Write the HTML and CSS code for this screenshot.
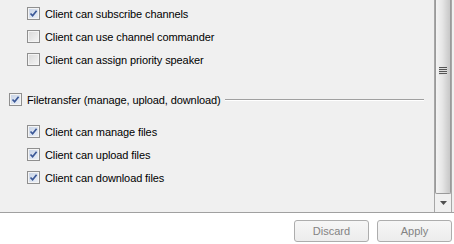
FILE: index.html
```html
<!DOCTYPE html>
<html lang="en">
<head>
    <meta charset="UTF-8">
    <title>Permissions</title>
    <link rel="stylesheet" href="styles.css">
</head>
<body>
    <div class="panel">
        <div class="content">
            <div class="row">
                <span class="box checked"><svg viewBox="0 0 9 9"><path d="M1.5 4.5 L3.6 6.8 L7.6 1.8"/></svg></span>
                Client can subscribe channels
            </div>
            <div class="row">
                <span class="box"></span>
                Client can use channel commander
            </div>
            <div class="row">
                <span class="box"></span>
                Client can assign priority speaker
            </div>

            <div class="group">
                <span class="box checked"><svg viewBox="0 0 9 9"><path d="M1.5 4.5 L3.6 6.8 L7.6 1.8"/></svg></span>
                <span class="group-title">Filetransfer (manage, upload, download)</span>
                <span class="rule"></span>
            </div>

            <div class="row first">
                <span class="box checked"><svg viewBox="0 0 9 9"><path d="M1.5 4.5 L3.6 6.8 L7.6 1.8"/></svg></span>
                Client can manage files
            </div>
            <div class="row">
                <span class="box checked"><svg viewBox="0 0 9 9"><path d="M1.5 4.5 L3.6 6.8 L7.6 1.8"/></svg></span>
                Client can upload files
            </div>
            <div class="row">
                <span class="box checked"><svg viewBox="0 0 9 9"><path d="M1.5 4.5 L3.6 6.8 L7.6 1.8"/></svg></span>
                Client can download files
            </div>
        </div>
        <div class="scrollbar">
            <div class="thumb"><span class="grip"></span></div>
            <div class="arrow"><svg viewBox="0 0 7 4"><path d="M0 0 H7 L3.5 4 Z"/></svg></div>
        </div>
    </div>
    <div class="footer">
        <button class="btn" disabled>Discard</button>
        <button class="btn" disabled>Apply</button>
    </div>
</body>
</html>
```

FILE: styles.css
```css
* {
    margin: 0;
    padding: 0;
    box-sizing: border-box;
}

body {
    width: 454px;
    height: 244px;
    background: #fff;
    font-family: "Liberation Sans", Arial, sans-serif;
    font-size: 11px;
    letter-spacing: -0.1px;
    color: #000;
    overflow: hidden;
}

.panel {
    display: flex;
    height: 213px;
    background: #f0f0f0;
    border-bottom: 1px solid #a0a0a0;
}

.content {
    flex: 1;
    padding: 2px 10px 0 0;
}

.row {
    display: flex;
    align-items: center;
    height: 23px;
    padding-left: 27px;
}

.row.first {
    margin-top: 9px;
}

.group {
    display: flex;
    align-items: center;
    height: 23px;
    margin-top: 17px;
    padding-left: 9px;
}

.group-title {
    white-space: nowrap;
}

.rule {
    flex: 1;
    margin-left: 4px;
    border-top: 1px solid #a0a0a0;
    border-bottom: 1px solid #fff;
}

/* checkbox */
.box {
    flex: none;
    width: 13px;
    height: 13px;
    margin-right: 5px;
    border: 1px solid #8f8f8f;
    background: linear-gradient(135deg, #d8d8d8, #f6f6f6);
    box-shadow: inset 0 0 0 1px #f4f4f4;
    display: flex;
    align-items: center;
    justify-content: center;
}

.box.checked {
    background: linear-gradient(135deg, #c6d2e6, #eef2f8);
}

.box svg {
    width: 9px;
    height: 9px;
}

.box svg path {
    fill: none;
    stroke: #3a5797;
    stroke-width: 1.7;
}

/* scrollbar */
.scrollbar {
    flex: none;
    display: flex;
    flex-direction: column;
    width: 18px;
    margin-right: 2px;
    border-left: 1px solid #a7a7a7;
    border-right: 1px solid #a7a7a7;
    background: #e8e8e8;
}

.thumb {
    height: 194px;
    border: 1px solid #9a9a9a;
    border-top: none;
    border-radius: 0 0 2px 2px;
    background: linear-gradient(90deg, #f4f4f4, #e6e6e6 45%, #d2d2d2 80%, #c8c8c8);
    display: flex;
    justify-content: center;
    padding-top: 67px;
}

.grip {
    width: 8px;
    height: 8px;
    background: repeating-linear-gradient(180deg, #555 0, #555 1px, #ddd 1px, #ddd 2px);
}

.arrow {
    flex: 1;
    display: flex;
    align-items: center;
    justify-content: center;
    background: #f0f0f0;
}

.arrow svg {
    width: 7px;
    height: 4px;
    fill: #505050;
}

/* footer */
.footer {
    display: flex;
    justify-content: flex-end;
    gap: 8px;
    padding: 7px 2px 0 0;
}

.btn {
    width: 75px;
    height: 22px;
    border: 1px solid #adadad;
    border-radius: 3px;
    background: linear-gradient(#f6f6f6, #ececec);
    font-family: "Liberation Sans", Arial, sans-serif;
    font-size: 11px;
    color: #838383;
}
```
